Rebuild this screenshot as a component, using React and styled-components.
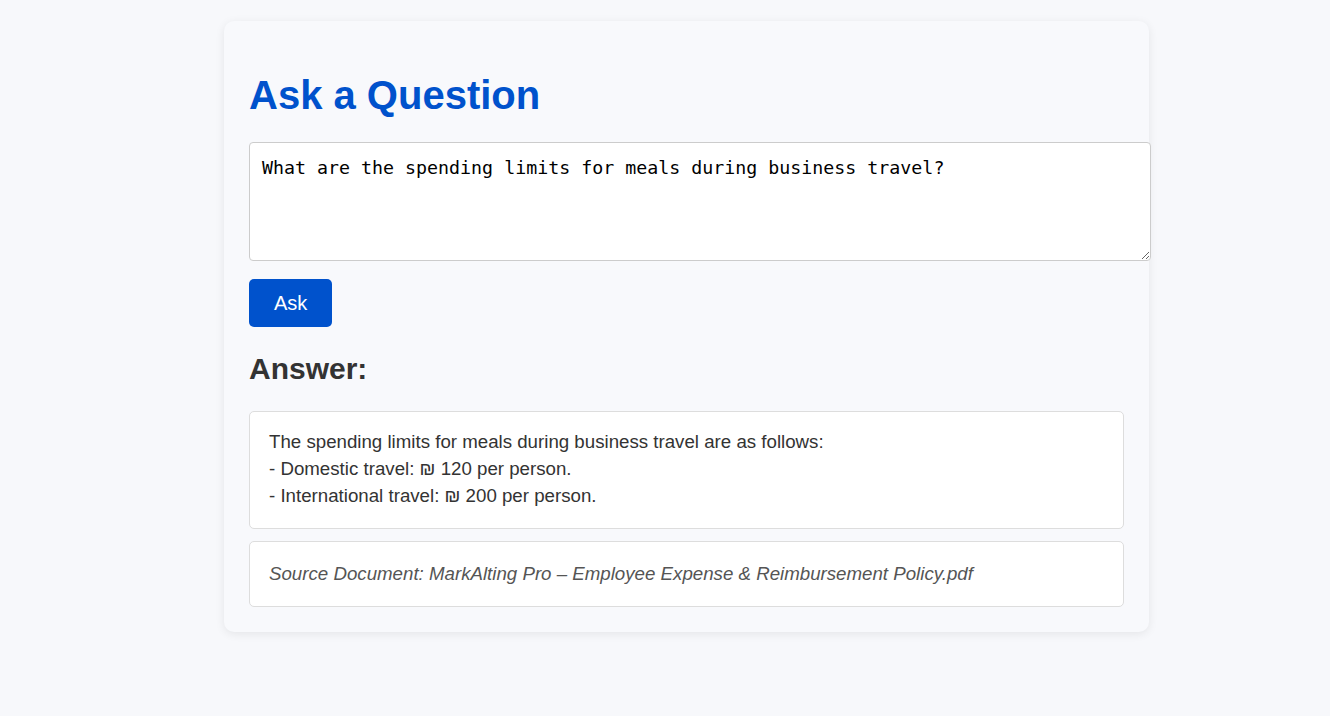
import React from "react";
import styled, { createGlobalStyle } from "styled-components";

const Global = createGlobalStyle`
  html, body {
    margin: 0;
    padding: 0;
    background: #f7f8fb;
    font-family: "Liberation Sans", Arial, sans-serif;
  }
`;

const Page = styled.div`
  padding: 21px 0 40px 224px;
`;

const Card = styled.main`
  box-sizing: border-box;
  width: 925px;
  padding: 25px;
  background: #f8f9fc;
  border-radius: 10px;
  box-shadow: 0 2px 10px rgba(0, 0, 0, 0.08);
  display: flex;
  flex-direction: column;
  align-items: flex-start;
`;

const Title = styled.h1`
  margin: 26px 0 24px;
  font-size: 40px;
  line-height: 46px;
  font-weight: 700;
  color: #0052cc;
`;

const Question = styled.textarea`
  box-sizing: content-box;
  width: calc(100% + 1px);
  height: 91px;
  margin: 0;
  padding: 14px 12px 12px;
  border: 1px solid #cccccc;
  border-radius: 4px;
  background: #ffffff;
  color: #000000;
  font-family: "DejaVu Sans Mono", monospace;
  font-size: 18.3px;
  resize: vertical;
  outline: none;
`;

const AskButton = styled.button`
  margin-top: 18px;
  height: 48px;
  padding: 0 25px;
  border: none;
  border-radius: 5px;
  background: #0052cc;
  color: #ffffff;
  font-family: "Liberation Sans", Arial, sans-serif;
  font-size: 20px;
  cursor: pointer;
`;

const SubTitle = styled.h2`
  margin: 25px 0 25px;
  font-size: 30px;
  line-height: 34px;
  font-weight: 700;
  color: #333333;
`;

const Box = styled.div`
  box-sizing: border-box;
  width: 100%;
  background: #ffffff;
  border: 1px solid #dddddd;
  border-radius: 5px;
  padding: ${(p) => (p.$muted ? "18px 19px 19px" : "16px 19px 19px")};
  margin-top: ${(p) => (p.$muted ? "12px" : "0")};
  font-size: 18.7px;
  line-height: 27px;
  color: ${(p) => (p.$muted ? "#555555" : "#333333")};
  font-style: ${(p) => (p.$muted ? "italic" : "normal")};
  white-space: pre-line;
`;

export default function App() {
  return (
    <>
      <Global />
      <Page>
        <Card>
          <Title>Ask a Question</Title>
          <Question
            defaultValue="What are the spending limits for meals during business travel?"
          />
          <AskButton>Ask</AskButton>
          <SubTitle>Answer:</SubTitle>
          <Box>
            {"The spending limits for meals during business travel are as follows:\n- Domestic travel: ₪ 120 per person.\n- International travel: ₪ 200 per person."}
          </Box>
          <Box $muted>
            Source Document: MarkAlting Pro – Employee Expense &amp; Reimbursement Policy.pdf
          </Box>
        </Card>
      </Page>
    </>
  );
}
